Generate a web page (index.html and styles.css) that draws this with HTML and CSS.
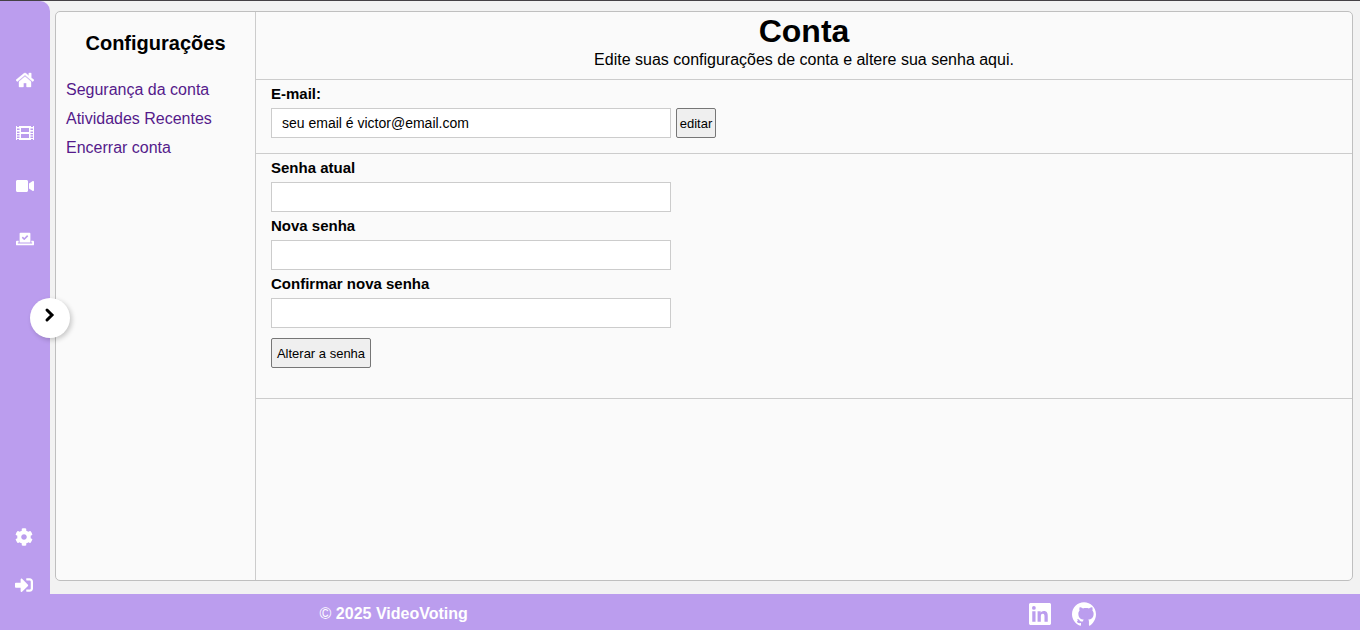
FILE: index.html
```html
<!DOCTYPE html>
<html lang="pt-BR">
<head>
<meta charset="utf-8">
<meta name="viewport" content="width=device-width, initial-scale=1">
<title>VideoVoting</title>
<link rel="stylesheet" href="styles.css">
</head>
<body>
<div class="shell">
  <nav class="sidebar" aria-label="Principal">
    <div class="nav-group">
      <a class="nav-link" href="#" aria-label="Início"><svg class="icon icon-home" viewBox="0 0 576 512"><path d="M280.37 148.26L96 300.11V464a16 16 0 0 0 16 16l112.06-.29a16 16 0 0 0 15.92-16V368a16 16 0 0 1 16-16h64a16 16 0 0 1 16 16v95.64a16 16 0 0 0 16 16.05L464 480a16 16 0 0 0 16-16V300L295.67 148.26a12.19 12.19 0 0 0-15.3 0zM571.6 251.47L488 182.56V44.05a12 12 0 0 0-12-12h-56a12 12 0 0 0-12 12v72.61L318.47 43a48 48 0 0 0-61 0L4.34 251.47a12 12 0 0 0-1.6 16.9l25.5 31A12 12 0 0 0 45.15 301l235.22-193.74a12.19 12.19 0 0 1 15.3 0L530.9 301a12 12 0 0 0 16.9-1.6l25.5-31a12 12 0 0 0-1.7-16.93z"/></svg></a>
      <a class="nav-link" href="#" aria-label="Filmes"><svg class="icon" viewBox="0 0 36 36"><path fill-rule="evenodd" d="M0 4h2v2h4V4h24v2h4V4h2v28h-2v-2h-4v2H6v-2H2v2H0zM10 8v8h16V8zM10 20v8h16v-8zM2 9v3h5V9zM2 15v3h5v-3zM2 20v3h5v-3zM2 25v3h5v-3zM29 9v3h5V9zM29 15v3h5v-3zM29 20v3h5v-3zM29 25v3h5v-3z"/></svg></a>
      <a class="nav-link" href="#" aria-label="Vídeos"><svg class="icon" viewBox="0 0 576 512"><path d="M336.2 64H47.8C21.4 64 0 85.4 0 111.8v288.4C0 426.6 21.4 448 47.8 448h288.4c26.4 0 47.8-21.4 47.8-47.8V111.8c0-26.4-21.4-47.8-47.8-47.8zm189.4 37.7L416 177.3v157.4l109.6 75.5c21.2 14.6 50.4-.3 50.4-25.8V127.5c0-25.4-29.1-40.4-50.4-25.8z"/></svg></a>
      <a class="nav-link" href="#" aria-label="Votação"><svg class="icon" viewBox="0 0 640 512"><path d="M608 320h-64v64h22.4c5.3 0 9.6 3.6 9.6 8v16c0 4.4-4.3 8-9.6 8H73.6c-5.3 0-9.6-3.6-9.6-8v-16c0-4.4 4.3-8 9.6-8H96v-64H32c-17.7 0-32 14.3-32 32v96c0 17.7 14.3 32 32 32h576c17.7 0 32-14.3 32-32v-96c0-17.7-14.3-32-32-32zm-96 64V64.3c0-17.9-14.5-32.3-32.3-32.3H160.4C142.5 32 128 46.5 128 64.3V384h384zM211.2 202l25.5-25.3c4.2-4.2 11-4.2 15.2.1l41.3 41.6 95.2-94.4c4.2-4.2 11-4.2 15.2.1l25.3 25.5c4.2 4.2 4.2 11-.1 15.2L300.5 292c-4.2 4.2-11 4.2-15.2-.1l-74.1-74.7c-4.3-4.2-4.2-11 0-15.2z"/></svg></a>
    </div>
    <div class="nav-group nav-group-end">
      <a class="nav-link" href="#" aria-label="Configurações"><svg class="icon" viewBox="0 0 512 512"><path d="M487.4 315.7l-42.6-24.6c4.3-23.2 4.3-47 0-70.2l42.6-24.6c4.9-2.8 7.1-8.6 5.5-14-11.1-35.6-30-67.8-54.7-94.6-3.8-4.1-10-5.1-14.8-2.3L380.8 110c-17.9-15.4-38.5-27.3-60.8-35.1V25.8c0-5.6-3.9-10.5-9.4-11.7-36.7-8.2-74.3-7.8-109.2 0-5.5 1.2-9.4 6.1-9.4 11.7V75c-22.2 7.9-42.8 19.8-60.8 35.1L88.7 85.5c-4.9-2.8-11-1.9-14.8 2.3-24.7 26.7-43.6 58.9-54.7 94.6-1.7 5.4.6 11.2 5.5 14L67.3 221c-4.3 23.2-4.3 47 0 70.2l-42.6 24.6c-4.9 2.8-7.1 8.6-5.5 14 11.1 35.6 30 67.8 54.7 94.6 3.8 4.1 10 5.1 14.8 2.3l42.6-24.6c17.9 15.4 38.5 27.3 60.8 35.1v49.2c0 5.6 3.9 10.5 9.4 11.7 36.7 8.2 74.3 7.8 109.2 0 5.500-1.200 9.400-6.100 9.400-11.700v-49.200c22.200-7.900 42.800-19.800 60.800-35.100l42.600 24.600c4.900 2.800 11 1.900 14.800-2.300 24.700-26.700 43.600-58.900 54.700-94.600 1.500-5.500-.7-11.300-5.600-14.100zM256 336c-44.100 0-80-35.900-80-80s35.900-80 80-80 80 35.900 80 80-35.900 80-80 80z"/></svg></a>
      <a class="nav-link" href="#" aria-label="Sair"><svg class="icon" viewBox="0 0 512 512"><path d="M416 448h-84c-6.600 0-12-5.400-12-12v-40c0-6.600 5.400-12 12-12h84c17.700 0 32-14.300 32-32V160c0-17.700-14.300-32-32-32h-84c-6.600 0-12-5.400-12-12V76c0-6.600 5.400-12 12-12h84c53 0 96 43 96 96v192c0 53-43 96-96 96zm-47-201L201 79c-15-15-41-4.500-41 17v96H24c-13.300 0-24 10.700-24 24v96c0 13.300 10.700 24 24 24h136v96c0 21.500 26 32 41 17l168-168c9.300-9.400 9.300-24.600 0-34z"/></svg></a>
    </div>
    <button class="expand" type="button" aria-label="Expandir menu"><svg class="chevron" viewBox="0 0 12 16"><path d="M3 3l5 5-5 5"/></svg></button>
  </nav>

  <div class="card">
    <aside class="settings">
      <h2 class="settings-title">Configurações</h2>
      <ul class="settings-list">
        <li><a class="settings-link" href="#">Segurança da conta</a></li>
        <li><a class="settings-link" href="#">Atividades Recentes</a></li>
        <li><a class="settings-link" href="#">Encerrar conta</a></li>
      </ul>
    </aside>
    <main class="content">
      <header class="intro">
        <h1 class="intro-title">Conta</h1>
        <p class="intro-text">Edite suas configurações de conta e altere sua senha aqui.</p>
      </header>
      <form class="section section-email">
        <label class="label" for="email">E-mail:</label>
        <div class="row">
          <input class="field" id="email" type="text" value="seu email é victor@email.com">
          <button class="button" type="button">editar</button>
        </div>
      </form>
      <form class="section section-password">
        <label class="label" for="current">Senha atual</label>
        <input class="field" id="current" type="password">
        <label class="label" for="new">Nova senha</label>
        <input class="field" id="new" type="password">
        <label class="label" for="confirm">Confirmar nova senha</label>
        <input class="field" id="confirm" type="password">
        <button class="button button-wide" type="button">Alterar a senha</button>
      </form>
    </main>
  </div>
</div>

<footer class="footer">
  <p class="copyright"><span class="mark">©</span> 2025 VideoVoting</p>
  <div class="social">
    <a class="social-link" href="#" aria-label="LinkedIn"><svg class="linkedin" viewBox="0 0 24 24"><path d="M20.447 20.452h-3.554v-5.569c0-1.328-.027-3.037-1.852-3.037-1.853 0-2.136 1.445-2.136 2.939v5.667H9.351V9h3.414v1.561h.046c.477-.9 1.637-1.850 3.370-1.850 3.601 0 4.267 2.370 4.267 5.455v6.286zM5.337 7.433a2.062 2.062 0 0 1-2.063-2.065 2.064 2.064 0 1 1 2.063 2.065zm1.782 13.019H3.555V9h3.564v11.452zM22.225 0H1.771C.792 0 0 .774 0 1.729v20.542C0 23.227.792 24 1.771 24h20.451C23.200 24 24 23.227 24 22.271V1.729C24 .774 23.200 0 22.222 0z"/></svg></a>
    <a class="social-link" href="#" aria-label="GitHub"><svg class="github" viewBox="0 0 24 24"><path d="M12 .297c-6.630 0-12 5.373-12 12 0 5.303 3.438 9.800 8.205 11.385.6.113.82-.258.82-.577 0-.285-.01-1.040-.015-2.040-3.338.724-4.042-1.610-4.042-1.610C6.422 18.070 5.633 17.700 5.633 17.700c-1.087-.744.084-.729.084-.729 1.205.084 1.838 1.236 1.838 1.236 1.070 1.835 2.809 1.305 3.495.998.108-.776.417-1.305.76-1.605-2.665-.3-5.466-1.332-5.466-5.930 0-1.310.465-2.380 1.235-3.220-.135-.303-.54-1.523.105-3.176 0 0 1.005-.322 3.300 1.230.96-.267 1.980-.399 3-.405 1.020.006 2.040.138 3 .405 2.280-1.552 3.285-1.230 3.285-1.230.645 1.653.24 2.873.12 3.176.765.84 1.230 1.910 1.230 3.220 0 4.610-2.805 5.625-5.475 5.920.42.36.81 1.096.81 2.220 0 1.606-.015 2.896-.015 3.286 0 .315.21.69.825.57C20.565 22.092 24 17.592 24 12.297c0-6.627-5.373-12-12-12"/></svg></a>
  </div>
</footer>
</body>
</html>
```

FILE: styles.css
```css
* {
  box-sizing: border-box;
  margin: 0;
  padding: 0;
}

body {
  display: flex;
  flex-direction: column;
  min-height: 100vh;
  border-top: 1px solid #444145;
  background: #f2f2f2;
  color: #000;
  font: 16px/18px "Liberation Sans", Arial, sans-serif;
}

.shell {
  display: flex;
  flex: 1;
}

/* Sidebar */
.sidebar {
  position: relative;
  display: flex;
  flex-direction: column;
  justify-content: space-between;
  width: 50px;
  padding-top: 70px;
  border-top-right-radius: 10px;
  background: #bb9dee;
}

.nav-group {
  display: flex;
  flex-direction: column;
  align-items: center;
  gap: 35px;
}

.nav-group-end {
  gap: 30px;
  padding-right: 2px;
}

.nav-link {
  display: block;
  height: 18px;
}

.icon {
  display: block;
  width: 18px;
  height: 18px;
  fill: #fff;
}

.icon-home {
  stroke: #fff;
  stroke-width: 12;
}

.expand {
  position: absolute;
  top: 50%;
  right: -20px;
  display: grid;
  place-items: center;
  width: 40px;
  height: 40px;
  padding-bottom: 6px;
  border: 0;
  border-radius: 50%;
  background: #fff;
  box-shadow: 2px 2px 5px rgba(0, 0, 0, 0.2);
}

.chevron {
  width: 12px;
  height: 16px;
  fill: none;
  stroke: #000;
  stroke-width: 3;
  stroke-linecap: round;
}

/* Card */
.card {
  display: flex;
  flex: 1;
  margin: 10px 7px 13px 5px;
  border: 1px solid #bfbfbf;
  border-radius: 5px;
  background: #fafafa;
}

.settings {
  width: 200px;
  padding: 20px 10px;
  border-right: 1px solid #ccc;
}

.settings-title {
  font-size: 20px;
  line-height: 22px;
  text-align: center;
}

.settings-list {
  display: grid;
  gap: 11px;
  margin-top: 27px;
  list-style: none;
}

.settings-link {
  color: #551a8b;
  text-decoration: none;
}

.content {
  flex: 1;
}

.intro {
  padding-bottom: 10px;
  border-bottom: 1px solid #ccc;
  text-align: center;
}

.intro-title {
  font-size: 32px;
  line-height: 39px;
}

.section {
  display: flex;
  flex-direction: column;
  align-items: flex-start;
  padding: 0 15px;
  border-bottom: 1px solid #ccc;
}

.section-email {
  padding-bottom: 15px;
}

.section-password {
  padding-bottom: 30px;
}

.label {
  font-size: 15px;
  font-weight: bold;
  line-height: 18px;
  padding: 5px 0;
}

.row {
  display: flex;
  gap: 5px;
}

.field {
  width: 400px;
  height: 30px;
  padding: 0 10px;
  border: 1px solid #ccc;
  background: #fff;
  color: #000;
  font: 14px "Liberation Sans", Arial, sans-serif;
}

.button {
  height: 30px;
  min-width: 40px;
  border: 1px solid #767676;
  border-radius: 2px;
  background: #efefef;
  color: #000;
  font: 13px "Liberation Sans", Arial, sans-serif;
}

.button-wide {
  min-width: 100px;
  margin-top: 10px;
}

/* Footer */
.footer {
  display: flex;
  align-items: center;
  justify-content: space-between;
  height: 36px;
  padding: 3px 19.4% 0 23.5%;
  background: #bb9dee;
  color: #fff;
}

.copyright {
  font-weight: bold;
}

.mark {
  font-weight: normal;
}

.social {
  display: flex;
  align-items: center;
  gap: 21px;
}

.social-link {
  display: block;
}

.linkedin,
.github {
  display: block;
  width: 22px;
  height: 22px;
  fill: #fff;
}

.github {
  width: 24px;
  height: 24px;
}
```
